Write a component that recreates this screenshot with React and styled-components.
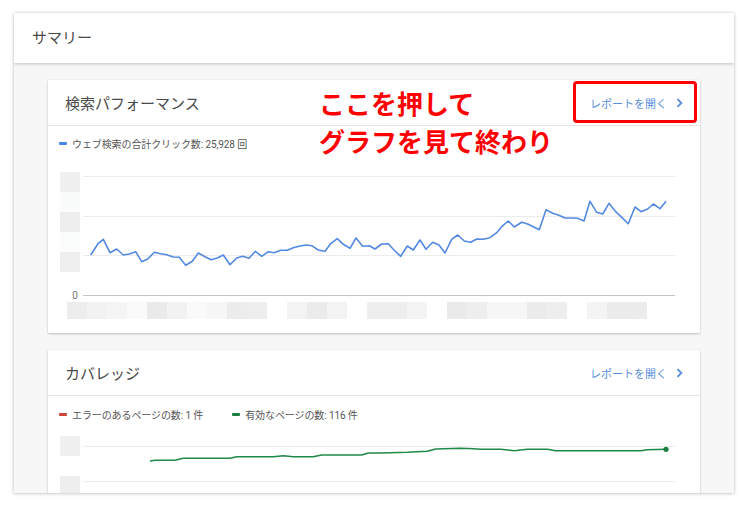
import React from "react";
import styled, { createGlobalStyle } from "styled-components";

const Global = createGlobalStyle`
  html, body { margin: 0; padding: 0; background: #ffffff; }
  body { font-family: Roboto, "Noto Sans CJK JP", "Noto Sans", sans-serif; }
  * { box-sizing: border-box; }
`;

const Frame = styled.div`
  position: relative;
  margin: 13px 14px;
  width: 720px;
  height: 480px;
  overflow: hidden;
  background: #f7f7f7;
  box-shadow: 0 0 3px rgba(0,0,0,0.18), 0 1px 4px rgba(0,0,0,0.12);
  display: flex;
  flex-direction: column;
`;

const TopBar = styled.header`
  flex: 0 0 50px;
  height: 50px;
  background: #fff;
  display: flex;
  align-items: center;
  padding-left: 18px;
  padding-bottom: 4px;
  font-size: 15px;
  color: #4a4a4a;
  box-shadow: 0 1px 3px rgba(0,0,0,0.22);
  position: relative;
  z-index: 1;
`;

const Content = styled.main`
  flex: 1;
  padding: 17px 34px 0;
  display: flex;
  flex-direction: column;
  gap: 17px;
`;

const Card = styled.section`
  background: #fff;
  flex: 0 0 auto;
  box-shadow: 0 1px 2px rgba(0,0,0,0.22), 0 0 1px rgba(0,0,0,0.08);
  display: flex;
  flex-direction: column;
`;

const CardHeader = styled.div`
  height: 46px;
  border-bottom: 1px solid #e3e3e3;
  display: flex;
  align-items: center;
  justify-content: space-between;
  padding: 0 17px;
`;

const CardTitle = styled.h2`
  margin: 0;
  font-size: 15px;
  font-weight: 400;
  color: #4a4a4a;
`;

const ReportLink = styled.a`
  display: flex;
  align-items: center;
  gap: 9px;
  font-size: 11px;
  color: #5a8fdc;
  text-decoration: none;
`;

const Legend = styled.div`
  height: ${(p) => p.$h}px;
  display: flex;
  align-items: center;
  gap: 29px;
  padding-left: 11px;
  padding-top: ${(p) => p.$pt || 0}px;
`;

const LegendItem = styled.span`
  display: flex;
  align-items: center;
  gap: 5px;
  font-size: 10px;
  letter-spacing: -0.1px;
  color: #555;
`;

const Swatch = styled.i`
  display: inline-block;
  width: 8px;
  height: 3px;
  border-radius: 1px;
  background: ${(p) => p.$c};
`;

const ChartSvg = styled.svg`
  display: block;
`;

const Annotation = styled.div`
  position: absolute;
  left: 305px;
  top: 71px;
  font-family: "Noto Sans CJK JP", sans-serif;
  font-weight: 700;
  font-size: 26px;
  line-height: 38px;
  color: #ff0000;
  letter-spacing: 0;
  z-index: 3;
`;

const Highlight = styled.div`
  position: absolute;
  left: 559px;
  top: 68px;
  width: 124px;
  height: 42px;
  border: 3px solid #ff0000;
  border-radius: 4px;
  z-index: 3;
`;

const Chevron = () => (
  <svg width="7" height="10" viewBox="0 0 7 10">
    <path d="M1.5 1.2 L5.3 5 L1.5 8.8" fill="none" stroke="#5a8fdc" strokeWidth="1.9" />
  </svg>
);

const blue = [[90.7,255],[98.3,243.3],[103.3,239.3],[110,252.7],[116.7,249],[123.3,255],[129.3,254],[135.7,251.7],[141.7,261.7],[147.7,259],[154.3,252.3],[160.7,253.7],[166.7,254.7],[173.3,257],[179.3,257.3],[185.7,265.3],[192.3,261.3],[198.3,253],[205,256.7],[211,259.7],[217.3,258],[223.3,255],[230,264.7],[236.7,258],[242.7,256.3],[249,258.3],[255.3,251.3],[261.7,256.3],[268.3,251.7],[274.3,252.7],[280.7,250.3],[287.3,250.3],[293.3,247.7],[300,246],[306,245],[311.7,245.7],[318.3,250],[325,251.3],[331,243.3],[337.3,238.7],[343.3,244.3],[350,248.3],[356,238],[362.7,246.3],[369.3,245.7],[375,249],[381.7,244],[388.3,243.7],[394,250],[400.7,256.3],[407.3,246],[413.3,250],[420,240],[426,249.3],[432.7,242.3],[439,245],[445,253],[451.7,239.3],[457.7,235],[464.3,241],[470.7,242.3],[476.7,239],[483.3,239.3],[490,237.7],[496.7,232.7],[501.7,226.7],[508.3,221],[514.3,227],[521.7,222.3],[527.7,224],[533.3,226.7],[539.3,229.7],[546,209.7],[552.7,213.3],[558.3,215],[565,218],[571.7,218],[577.7,218.3],[584,221],[590,201.3],[596.7,212.3],[602.7,214],[609,203.3],[615.7,211.7],[621.7,217.3],[628.3,223.7],[635,207],[641,211.7],[647.7,209],[653.3,204],[660,208.7],[666,201.3]];

const green = [[150,461],[155,460.3],[175,460.3],[183.3,458.3],[230,458.3],[236.7,456.7],[273.3,456.7],[283.3,455.7],[293.3,456.7],[313.3,456.7],[321.7,455],[361.7,455],[368.3,453],[380.7,453],[407.3,452.3],[417.3,451.7],[427.3,451.3],[435.7,449],[460.7,448.3],[474,448.7],[480.7,449.3],[500.7,449.3],[514,450.7],[527.3,449.3],[547.3,449.3],[555.7,450.7],[640.7,450.7],[647.3,449.7],[666,449.3]];

const toPts = (arr) => arr.map(([x, y]) => `${x},${y}`).join(" ");

const xBlocks = [
  "#ededed", "#f2f2f2", "#f5f5f5", "#fafafa", "#eaeaea", "#f2f2f2", "#fafafa", "#f6f6f6",
  "#ececec", "#eeeeee", null, "#f3f3f3", "#ebebeb", "#f3f3f3", null, "#eeeeee",
  "#eeeeee", "#f4f4f4", null, "#eaeaea", "#eeeeee", "#f6f6f6", "#f6f6f6", "#ebebeb",
  "#eeeeee", null, "#f4f4f4", "#ebebeb", "#ececec",
];

const PerformanceChart = () => (
  <ChartSvg width="652" height="170" viewBox="48 160 652 170">
    <rect x="60" y="172" width="20" height="20" fill="#f0f0f0" />
    <rect x="60" y="192" width="20" height="20" fill="#fafcfc" />
    <rect x="60" y="212" width="20" height="20" fill="#eeeeee" />
    <rect x="60" y="232" width="20" height="20" fill="#fbfcfc" />
    <rect x="60" y="252" width="20" height="20" fill="#efefef" />
    {[176.5, 216.5, 255.5].map((y) => (
      <line key={y} x1="83" x2="675" y1={y} y2={y} stroke="#ececec" strokeWidth="1" />
    ))}
    <line x1="83" x2="675" y1="295.5" y2="295.5" stroke="#c4c4c4" strokeWidth="1" />
    <text x="75" y="299" fontSize="10" fill="#777" textAnchor="middle" fontFamily="Roboto, sans-serif">0</text>
    {xBlocks.map((c, i) =>
      c ? <rect key={i} x={67 + i * 20} y="302" width="20" height="17" fill={c} /> : null
    )}
    <polyline points={toPts(blue)} fill="none" stroke="#5389e0" strokeWidth="1.6" strokeLinejoin="round" />
  </ChartSvg>
);

const CoverageChart = () => (
  <ChartSvg width="652" height="70" viewBox="48 428 652 70">
    <rect x="60" y="436" width="20" height="20" fill="#f0f0f0" />
    <rect x="60" y="476" width="20" height="20" fill="#eeeeee" />
    {[446.5, 481.5].map((y) => (
      <line key={y} x1="83" x2="675" y1={y} y2={y} stroke="#ececec" strokeWidth="1" />
    ))}
    <polyline points={toPts(green)} fill="none" stroke="#1f8a47" strokeWidth="1.6" strokeLinejoin="round" />
    <circle cx="666" cy="449.3" r="2.6" fill="#1a7f3f" />
  </ChartSvg>
);

const BottomSpace = styled.div`
  height: 3px;
`;

export default function App() {
  return (
    <>
      <Global />
      <Frame>
        <TopBar>サマリー</TopBar>
        <Content>
          <Card>
            <CardHeader>
              <CardTitle>検索パフォーマンス</CardTitle>
              <ReportLink href="#">レポートを開く<Chevron /></ReportLink>
            </CardHeader>
            <Legend $h={34}>
              <LegendItem><Swatch $c="#4a86e8" />ウェブ検索の合計クリック数: 25,928 回</LegendItem>
            </Legend>
            <PerformanceChart />
            <BottomSpace />
          </Card>
          <Card>
            <CardHeader>
              <CardTitle>カバレッジ</CardTitle>
              <ReportLink href="#">レポートを開く<Chevron /></ReportLink>
            </CardHeader>
            <Legend $h={32} $pt={5}>
              <LegendItem><Swatch $c="#d0463b" />エラーのあるページの数: 1 件</LegendItem>
              <LegendItem><Swatch $c="#1a7f3f" />有効なページの数: 116 件</LegendItem>
            </Legend>
            <CoverageChart />
          </Card>
        </Content>
        <Annotation>
          ここを押して<br />グラフを見て終わり
        </Annotation>
        <Highlight />
      </Frame>
    </>
  );
}
